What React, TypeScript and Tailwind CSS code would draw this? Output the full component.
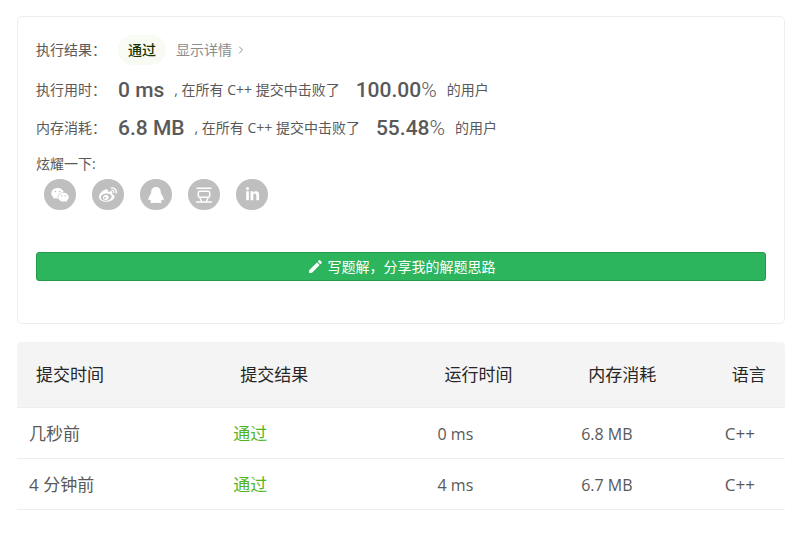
import type { ReactNode } from "react";
import { AiFillWechat } from "react-icons/ai";
import { FaWeibo, FaLinkedinIn } from "react-icons/fa";
import { MdEdit } from "react-icons/md";
import { ChevronRight } from "lucide-react";

function PenguinIcon() {
  return (
    <svg width="18" height="18" viewBox="0 0 18 18" fill="currentColor" aria-hidden="true">
      <path d="M9 1C5.900 1 4.200 3.200 4.200 6.200C4.200 8.200 1.200 11.200 1.200 13.600C1.200 14.700 2.200 14.200 3 13.400C3.200 14.200 3.700 14.900 4.300 15.400C3 15.800 3.100 17.100 4.900 17.100H7.300C8.200 17.100 8.700 16.700 9 16.400C9.300 16.700 9.800 17.100 10.700 17.100H13.100C14.900 17.100 15 15.800 13.700 15.400C14.300 14.900 14.800 14.200 15 13.400C15.800 14.200 16.800 14.700 16.800 13.600C16.800 11.200 13.800 8.200 13.800 6.200C13.800 3.200 12.100 1 9 1Z" />
    </svg>
  );
}

function DoubanIcon() {
  return (
    <svg
      width="18"
      height="18"
      viewBox="0 0 18 18"
      fill="none"
      stroke="currentColor"
      strokeWidth="1.5"
      strokeLinecap="round"
      aria-hidden="true"
    >
      <path d="M2 2.200H16M1.500 16H16.500" />
      <rect x="3.300" y="5.200" width="11.400" height="6" rx="1.500" />
      <path d="M5.200 12.500L6.600 15.500M12.800 12.500L11.400 15.500" />
    </svg>
  );
}

const shares = [
  { label: "微信", icon: <AiFillWechat size={20} /> },
  { label: "微博", icon: <FaWeibo size={18} /> },
  { label: "QQ", icon: <PenguinIcon /> },
  { label: "豆瓣", icon: <DoubanIcon /> },
  { label: "领英", icon: <FaLinkedinIn size={15} /> },
];

const submissions = [
  { time: "几秒前", runtime: "0 ms", memory: "6.8 MB" },
  { time: "4 分钟前", runtime: "4 ms", memory: "6.7 MB" },
];

function Label({ children }: { children: ReactNode }) {
  return <span className="w-[82px] shrink-0">{children}</span>;
}

function Figure({ children }: { children: ReactNode }) {
  return (
    <strong className="font-['Roboto',sans-serif] text-[21px] font-medium">
      {children}
    </strong>
  );
}

function Stat({ label, value, percent }: { label: string; value: string; percent: string }) {
  return (
    <div className="flex h-[38px] items-center whitespace-nowrap">
      <Label>{label}</Label>
      <Figure>{value}</Figure>
      <span className="ml-[10px] mr-4">, 在所有 C++ 提交中击败了</span>
      <Figure>
        {percent}
        <span className="font-light">%</span>
      </Figure>
      <span className="ml-[10px]">的用户</span>
    </div>
  );
}

export default function App() {
  return (
    <main className="bg-white py-4 pl-[17px] pr-[19px] font-['Open_Sans','Noto_Sans_CJK_SC',sans-serif] text-[#595959]">
      <section className="rounded-[5px] border border-[#eeeeee] px-[18px] pb-[42px] pt-[18px] text-sm leading-5">
        <div className="flex h-[30px] items-center">
          <Label>执行结果：</Label>
          <span className="flex h-[30px] items-center rounded-full bg-[#f8fbf4] px-[10px] font-medium text-[#173300]">
            通过
          </span>
          <a href="#details" className="ml-[10px] flex items-center text-[#8c8c8c]">
            显示详情
            <ChevronRight size={12} className="ml-[3px]" />
          </a>
        </div>
        <div className="mt-[6px]">
          <Stat label="执行用时：" value="0 ms" percent="100.00" />
          <Stat label="内存消耗：" value="6.8 MB" percent="55.48" />
        </div>
        <p className="mt-[7px]">炫耀一下:</p>
        <div className="ml-2 mt-[5px] flex gap-4">
          {shares.map((share) => (
            <button
              key={share.label}
              type="button"
              aria-label={share.label}
              className="flex h-[31px] w-8 items-center justify-center rounded-full bg-[#bfbfbf] text-white"
            >
              {share.icon}
            </button>
          ))}
        </div>
        <button
          type="button"
          className="mt-[42px] flex h-[29px] w-full items-center justify-center gap-1 rounded-[3px] border border-[#269a4c] bg-[#2db55d] text-white"
        >
          <MdEdit size={17} />
          写题解，分享我的解题思路
        </button>
      </section>

      <table className="mt-[18px] w-full table-fixed border-separate border-spacing-0 text-left text-[17px] leading-6">
        <colgroup>
          <col className="w-[26.6%]" />
          <col className="w-[26.6%]" />
          <col className="w-[18.7%]" />
          <col className="w-[18.7%]" />
          <col />
        </colgroup>
        <thead className="text-[#262626]">
          <tr className="h-[66px]">
            {["提交时间", "提交结果", "运行时间", "内存消耗", "语言"].map((heading) => (
              <th
                key={heading}
                className="whitespace-nowrap border-b border-[#eeeeee] bg-[#f4f4f4] pl-[19px] pt-px font-normal first:rounded-tl-[4px] last:rounded-tr-[4px]"
              >
                {heading}
              </th>
            ))}
          </tr>
        </thead>
        <tbody>
          {submissions.map((row) => (
            <tr key={row.time} className="h-[51px]">
              <td className="border-b border-[#eeeeee] pl-3 pt-[2px]">{row.time}</td>
              <td className="border-b border-[#eeeeee] pl-3 pt-[2px]">
                <a href="#submission" className="text-[#52b51e]">通过</a>
              </td>
              <td className="border-b border-[#eeeeee] pl-3 pt-[2px] text-base">{row.runtime}</td>
              <td className="border-b border-[#eeeeee] pl-3 pt-[2px] text-base">{row.memory}</td>
              <td className="border-b border-[#eeeeee] pl-3 pt-[2px]">C++</td>
            </tr>
          ))}
        </tbody>
      </table>
    </main>
  );
}
